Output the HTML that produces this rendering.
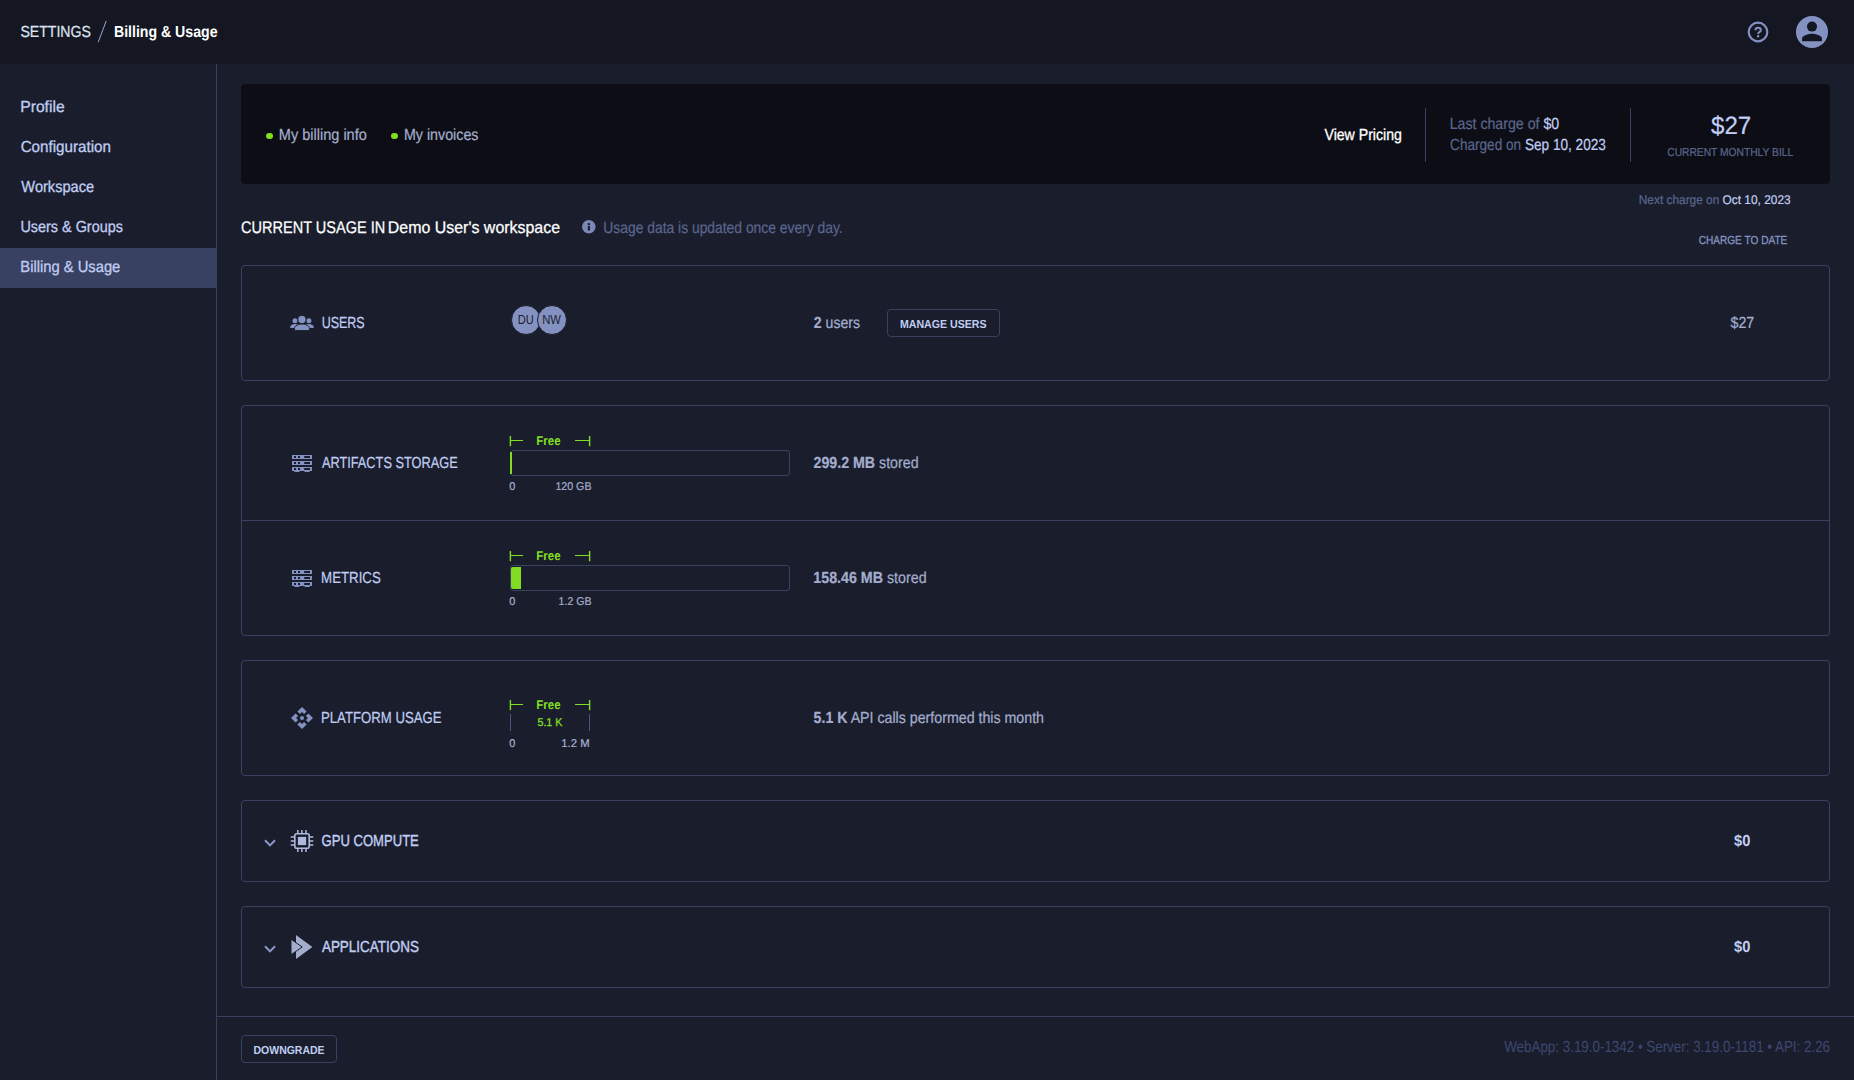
<!DOCTYPE html>
<html lang="en"><head><meta charset="utf-8"><title>Billing &amp; Usage</title>
<style>
html,body{margin:0;padding:0}
body{width:1854px;height:1080px;overflow:hidden;position:relative;background:#1a1e2c;font-family:"Liberation Sans",sans-serif;}
.a{position:absolute;box-sizing:border-box}
.t{text-rendering:geometricPrecision;position:absolute;left:0;white-space:nowrap;transform-origin:0 0;font-family:"Liberation Sans",sans-serif;font-weight:400}
.t b{font-weight:700}
.card{position:absolute;box-sizing:border-box;left:241px;width:1589px;border:1px solid #384161;border-radius:4px}
.btn{position:absolute;box-sizing:border-box;border:1px solid #384161;border-radius:4px}
.bar{position:absolute;box-sizing:border-box;left:510px;width:280px;height:26px;border:1px solid #384161;border-radius:3px}
.g{position:absolute;background:#82dc23}
.av{position:absolute;box-sizing:content-box;width:28.5px;height:28.5px;border-radius:50%;background:#8492c2;border:1px solid #1a1e2c}
svg{position:absolute;overflow:visible}

</style></head>
<body>
<!-- header -->
<div class="a" style="left:0;top:0;width:1854px;height:64px;background:#141722"></div>
<svg style="left:96px;top:19px" width="12" height="25"><line x1="2.2" y1="23.2" x2="10.2" y2="2" stroke="#9aa5d0" stroke-width="1"/></svg>
<!-- help icon -->
<svg style="left:1746px;top:20px" width="24" height="24" viewBox="0 0 24 24"><circle cx="12" cy="12" r="9.3" fill="none" stroke="#8492c2" stroke-width="2.2"/><path d="M9.5 10.2c0-1.5 1.1-2.4 2.65-2.4s2.65.9 2.65 2.3c0 1.1-.6 1.6-1.4 2.1-.8.5-1.3.9-1.3 1.7" fill="none" stroke="#8492c2" stroke-width="2"/><rect x="11" y="15.1" width="2.2" height="2.2" fill="#8492c2"/></svg>
<!-- user avatar -->
<svg style="left:1796px;top:16px" width="32" height="32" viewBox="0 0 32 32"><circle cx="16" cy="16" r="16" fill="#8492c2"/><circle cx="16" cy="10.6" r="5" fill="#141722"/><path d="M6 25.2v-2.5c0-3.3 6.7-5 10-5s10 1.7 10 5v2.5z" fill="#141722"/></svg>

<!-- sidebar -->
<div class="a" style="left:0;top:248px;width:216px;height:40px;background:#384161"></div>
<div class="a" style="left:216px;top:64px;width:1px;height:1016px;background:#384161"></div>

<!-- billing summary card -->
<div class="a" style="left:241px;top:84px;width:1589px;height:100px;background:#0d0e15;border-radius:4px"></div>
<div class="a" style="left:266px;top:132.7px;width:6.6px;height:6.6px;border-radius:50%;background:#82dc23"></div>
<div class="a" style="left:391.4px;top:132.7px;width:6.6px;height:6.6px;border-radius:50%;background:#82dc23"></div>
<div class="a" style="left:1425px;top:108px;width:1px;height:54px;background:#384161"></div>
<div class="a" style="left:1630px;top:108px;width:1px;height:54px;background:#384161"></div>

<!-- info icon -->
<svg style="left:581.9px;top:219.5px" width="13.6" height="13.6" viewBox="0 0 13.6 13.6"><circle cx="6.8" cy="6.8" r="6.8" fill="#7a87b7"/><rect x="5.8" y="6.1" width="2.2" height="4.3" fill="#1a1e2c"/><rect x="5.8" y="3.1" width="2.2" height="2.1" fill="#1a1e2c"/></svg>

<!-- cards -->
<div class="card" style="top:265px;height:116px"></div>
<div class="card" style="top:405px;height:231px"></div>
<div class="a" style="left:242px;top:520px;width:1587px;height:1px;background:#384161"></div>
<div class="card" style="top:660px;height:116px"></div>
<div class="card" style="top:800px;height:82px"></div>
<div class="card" style="top:906px;height:82px"></div>

<!-- card 1: users -->
<svg style="left:290px;top:311px" width="24" height="24" viewBox="0 0 24 24" fill="#8492c2"><circle cx="5" cy="9.7" r="2.5"/><circle cx="18.9" cy="9.7" r="2.5"/><path d="M.2 17v-.9c0-2 2.5-3.2 4.8-3.2 1.3 0 2.4.3 3.3.8-2.2.8-3.6 2-3.9 3.3z"/><path d="M23.7 17v-.9c0-2-2.5-3.2-4.8-3.2-1.3 0-2.4.3-3.3.8 2.2.8 3.6 2 3.9 3.3z"/><g stroke="#1a1e2c" stroke-width=".9"><circle cx="11.95" cy="8.5" r="4.1"/><path d="M4.5 19.5v-2c0-3 4.2-4.4 7.45-4.4s7.450 1.4 7.45 4.4v2z"/></g></svg>
<div class="av" style="left:510.9px;top:304.7px"></div>
<div class="av" style="left:536.6px;top:304.7px"></div>
<div class="btn" style="left:887px;top:309px;width:113px;height:28px"></div>

<!-- card 2: storage rows -->
<svg style="left:290px;top:451px" width="24" height="24" viewBox="0 0 24 24"><g fill="#8492c2"><path fill-rule="evenodd" d="M2 4h20v4H2zM4 5v2h2V5zm4 0v2h2V5zm6.2 0v2H20V5z"/><path fill-rule="evenodd" d="M2 10h20v4H2zM4 11v2h2v-2zm4 0v2h2v-2zm6.2 0v2H20v-2z"/><path fill-rule="evenodd" d="M2 16h20v4H2zM4 17v2h2v-2zm4 0v2h2v-2zm6.2 0v2H20v-2z"/><rect x="4.4" y="20" width="5" height="1"/><rect x="14.6" y="20" width="5" height="1"/></g></svg>
<svg style="left:290px;top:566px" width="24" height="24" viewBox="0 0 24 24"><g fill="#8492c2"><path fill-rule="evenodd" d="M2 4h20v4H2zM4 5v2h2V5zm4 0v2h2V5zm6.2 0v2H20V5z"/><path fill-rule="evenodd" d="M2 10h20v4H2zM4 11v2h2v-2zm4 0v2h2v-2zm6.2 0v2H20v-2z"/><path fill-rule="evenodd" d="M2 16h20v4H2zM4 17v2h2v-2zm4 0v2h2v-2zm6.2 0v2H20v-2z"/><rect x="4.4" y="20" width="5" height="1"/><rect x="14.6" y="20" width="5" height="1"/></g></svg>

<!-- Free brackets -->
<svg style="left:509px;top:435px" width="83" height="12"><path d="M1.4 1v10.2M80.6 1v10.2" fill="none" stroke="#82dc23" stroke-width="1.4"/><path d="M1.4 5.5H14M66 5.5h14.6" fill="none" stroke="#82dc23" stroke-width="1.1"/></svg>
<svg style="left:509px;top:550px" width="83" height="12"><path d="M1.4 1v10.2M80.6 1v10.2" fill="none" stroke="#82dc23" stroke-width="1.4"/><path d="M1.4 5.5H14M66 5.5h14.6" fill="none" stroke="#82dc23" stroke-width="1.1"/></svg>
<svg style="left:509px;top:699px" width="83" height="12"><path d="M1.4 1v10.2M80.6 1v10.2" fill="none" stroke="#82dc23" stroke-width="1.4"/><path d="M1.4 5.5H14M66 5.5h14.6" fill="none" stroke="#82dc23" stroke-width="1.1"/></svg>

<div class="bar" style="top:450px"></div>
<div class="g" style="left:509.8px;top:452px;width:2.5px;height:22px"></div>
<div class="bar" style="top:565px"></div>
<div class="g" style="left:511px;top:567px;width:10px;height:22px;border-radius:2px 0 0 2px"></div>

<!-- card 3: platform usage -->
<svg style="left:290px;top:706px" width="24" height="24" viewBox="0 0 24 24" fill="#8492c2"><circle cx="12" cy="12" r="2"/><path d="M12 6l2.12 2.12 2.5-2.5L12 1 7.38 5.62l2.5 2.5L12 6zm-6 6l2.12-2.12-2.5-2.5L1 12l4.62 4.62 2.5-2.5L6 12zm12 0l-2.12 2.12 2.5 2.5L23 12l-4.62-4.62-2.5 2.5L18 12zm-6 6l-2.12-2.12-2.5 2.5L12 23l4.62-4.62-2.5-2.5L12 18z"/></svg>
<div class="a" style="left:510px;top:714px;width:1px;height:17px;background:#4a547d"></div>
<div class="a" style="left:589px;top:714px;width:1px;height:17px;background:#4a547d"></div>

<!-- card 4: GPU compute -->
<svg style="left:264px;top:838px" width="12" height="10"><path d="M1 2.2l5 5.2 5-5.2" fill="none" stroke="#8b98c8" stroke-width="2"/></svg>
<svg style="left:290px;top:829px" width="24" height="24" viewBox="0 0 24 24"><rect x="4.8" y="4.8" width="14.4" height="14.4" rx="2" fill="none" stroke="#b0b9dc" stroke-width="1.6"/><rect x="7.9" y="7.9" width="8.2" height="8.2" fill="#b0b9dc"/><path d="M7.8 1v3M11.9 1v3M16 1v3M7.8 20v3M11.9 20v3M16 20v3M.7 8h3.3M.7 12.1h3.3M.7 16.1h3.3M20 8h3.3M20 12.1h3.3M20 16.1h3.3" stroke="#b0b9dc" stroke-width="1.5" fill="none"/></svg>

<!-- card 5: applications -->
<svg style="left:264px;top:944px" width="12" height="10"><path d="M1 2.2l5 5.2 5-5.2" fill="none" stroke="#8b98c8" stroke-width="2"/></svg>
<svg style="left:290px;top:934px" width="24" height="26" viewBox="0 0 24 26"><path d="M6 1L22.4 13 6 25z" fill="#a4adcd"/><path d="M1 5.2L12.2 13 1 20.8z" fill="#a4adcd" stroke="#1a1e2c" stroke-width="1"/></svg>

<!-- footer -->
<div class="a" style="left:217px;top:1016px;width:1637px;height:1px;background:#384161"></div>
<div class="btn" style="left:241px;top:1035px;width:96px;height:28px"></div>

<!-- text layer -->
<div class="t" style="top:24px;font-size:16.00px;line-height:18px;transform:translateX(20.41px) scaleX(0.8814);-webkit-text-stroke:0.22px;color:#dfe3f1;">SETTINGS</div>
<div class="t" style="top:24px;font-size:16.00px;line-height:18px;transform:translateX(113.93px) scaleX(0.8824);color:#ffffff;font-weight:700;">Billing &amp; Usage</div>
<div class="t" style="top:99px;font-size:16.00px;line-height:18px;transform:translateX(20.21px) scaleX(0.9796);-webkit-text-stroke:0.30px;color:#c1cdf3;">Profile</div>
<div class="t" style="top:139px;font-size:16.00px;line-height:18px;transform:translateX(20.64px) scaleX(0.9493);-webkit-text-stroke:0.30px;color:#c1cdf3;">Configuration</div>
<div class="t" style="top:179px;font-size:16.00px;line-height:18px;transform:translateX(21.35px) scaleX(0.9132);-webkit-text-stroke:0.30px;color:#c1cdf3;">Workspace</div>
<div class="t" style="top:219px;font-size:16.00px;line-height:18px;transform:translateX(20.39px) scaleX(0.9010);-webkit-text-stroke:0.30px;color:#c1cdf3;">Users &amp; Groups</div>
<div class="t" style="top:259px;font-size:16.00px;line-height:18px;transform:translateX(20.30px) scaleX(0.9219);-webkit-text-stroke:0.30px;color:#c1cdf3;">Billing &amp; Usage</div>
<div class="t" style="top:127px;font-size:16.00px;line-height:18px;transform:translateX(278.80px) scaleX(0.9079);-webkit-text-stroke:0.22px;color:#a4adcd;">My billing info</div>
<div class="t" style="top:127px;font-size:16.00px;line-height:18px;transform:translateX(403.90px) scaleX(0.8920);-webkit-text-stroke:0.22px;color:#a4adcd;">My invoices</div>
<div class="t" style="top:127px;font-size:16.00px;line-height:18px;transform:translateX(1324.47px) scaleX(0.8823);-webkit-text-stroke:0.30px;color:#ffffff;">View Pricing</div>
<div class="t" style="top:116px;font-size:16.00px;line-height:18px;transform:translateX(1449.64px) scaleX(0.8865);-webkit-text-stroke:0.22px;"><span style="color:#5a658e">Last charge of </span><span style="color:#c1cdf3">$0</span></div>
<div class="t" style="top:137px;font-size:16.00px;line-height:18px;transform:translateX(1450.07px) scaleX(0.8500);-webkit-text-stroke:0.22px;"><span style="color:#5a658e">Charged on </span><span style="color:#c1cdf3">Sep 10, 2023</span></div>
<div class="t" style="top:113px;font-size:25.02px;line-height:27px;transform:translateX(1711.02px) scaleX(0.9645);-webkit-text-stroke:0.22px;color:#c1cdf3;">$27</div>
<div class="t" style="top:146px;font-size:11.64px;line-height:14px;transform:translateX(1667.23px) scaleX(0.8819);-webkit-text-stroke:0.22px;color:#5a658e;">CURRENT MONTHLY BILL</div>
<div class="t" style="top:193px;font-size:12.65px;line-height:15px;transform:translateX(1638.77px) scaleX(0.9393);-webkit-text-stroke:0.22px;"><span style="color:#5a658e">Next charge on </span><span style="color:#c1cdf3">Oct 10, 2023</span></div>
<div class="t" style="top:234px;font-size:11.64px;line-height:14px;transform:translateX(1698.63px) scaleX(0.8692);-webkit-text-stroke:0.30px;color:#8492c2;">CHARGE TO DATE</div>
<div class="t" style="top:218px;font-size:16.87px;line-height:19px;transform:translateX(241.05px) scaleX(0.8614);-webkit-text-stroke:0.25px;color:#ffffff;">CURRENT USAGE IN</div>
<div class="t" style="top:218px;font-size:16.87px;line-height:19px;transform:translateX(387.80px) scaleX(0.9457);-webkit-text-stroke:0.25px;color:#ffffff;">Demo User's workspace</div>
<div class="t" style="top:220px;font-size:16.00px;line-height:18px;transform:translateX(603.35px) scaleX(0.8661);-webkit-text-stroke:0.22px;color:#5a658e;">Usage data is updated once every day.</div>
<div class="t" style="top:315px;font-size:16.00px;line-height:18px;transform:translateX(321.63px) scaleX(0.7806);-webkit-text-stroke:0.22px;color:#c1cdf3;">USERS</div>
<div class="t" style="top:312px;font-size:13.09px;line-height:15px;transform:translateX(517.82px) scaleX(0.8482);color:#1a1e2c;">DU</div>
<div class="t" style="top:312px;font-size:13.09px;line-height:15px;transform:translateX(542.19px) scaleX(0.8620);color:#1a1e2c;">NW</div>
<div class="t" style="top:315px;font-size:16.00px;line-height:18px;transform:translateX(813.81px) scaleX(0.8802);-webkit-text-stroke:0.22px;"><b style="color:#a4adcd">2</b><span style="color:#a4adcd"> users</span></div>
<div class="t" style="top:318px;font-size:11.64px;line-height:14px;transform:translateX(899.93px) scaleX(0.9128);color:#c1cdf3;font-weight:700;">MANAGE USERS</div>
<div class="t" style="top:315px;font-size:16.00px;line-height:18px;transform:translateX(1730.57px) scaleX(0.8852);-webkit-text-stroke:0.22px;color:#a4adcd;">$27</div>
<div class="t" style="top:455px;font-size:16.00px;line-height:18px;transform:translateX(321.89px) scaleX(0.7983);-webkit-text-stroke:0.22px;color:#c1cdf3;">ARTIFACTS STORAGE</div>
<div class="t" style="top:570px;font-size:16.00px;line-height:18px;transform:translateX(321.09px) scaleX(0.8292);-webkit-text-stroke:0.22px;color:#c1cdf3;">METRICS</div>
<div class="t" style="top:433px;font-size:12.80px;line-height:15px;transform:translateX(536.31px) scaleX(0.8990);color:#82dc23;font-weight:700;">Free</div>
<div class="t" style="top:481px;font-size:11.35px;line-height:13px;transform:translateX(509.17px) scaleX(0.9619);-webkit-text-stroke:0.22px;color:#a4adcd;">0</div>
<div class="t" style="top:548px;font-size:12.80px;line-height:15px;transform:translateX(536.31px) scaleX(0.8990);color:#82dc23;font-weight:700;">Free</div>
<div class="t" style="top:596px;font-size:11.35px;line-height:13px;transform:translateX(509.17px) scaleX(0.9619);-webkit-text-stroke:0.22px;color:#a4adcd;">0</div>
<div class="t" style="top:481px;font-size:11.35px;line-height:13px;transform:translateX(555.43px) scaleX(0.9368);-webkit-text-stroke:0.22px;color:#a4adcd;">120 GB</div>
<div class="t" style="top:596px;font-size:11.35px;line-height:13px;transform:translateX(558.59px) scaleX(0.9300);-webkit-text-stroke:0.22px;color:#a4adcd;">1.2 GB</div>
<div class="t" style="top:455px;font-size:16.00px;line-height:18px;transform:translateX(813.49px) scaleX(0.8881);-webkit-text-stroke:0.22px;"><b style="color:#a4adcd">299.2 MB</b><span style="color:#a4adcd"> stored</span></div>
<div class="t" style="top:570px;font-size:16.00px;line-height:18px;transform:translateX(813.31px) scaleX(0.8905);-webkit-text-stroke:0.22px;"><b style="color:#a4adcd">158.46 MB</b><span style="color:#a4adcd"> stored</span></div>
<div class="t" style="top:710px;font-size:16.00px;line-height:18px;transform:translateX(321.00px) scaleX(0.8230);-webkit-text-stroke:0.22px;color:#c1cdf3;">PLATFORM USAGE</div>
<div class="t" style="top:697px;font-size:12.80px;line-height:15px;transform:translateX(536.31px) scaleX(0.8990);color:#82dc23;font-weight:700;">Free</div>
<div class="t" style="top:717px;font-size:11.35px;line-height:13px;transform:translateX(537.43px) scaleX(0.9447);-webkit-text-stroke:0.30px;color:#82dc23;">5.1 K</div>
<div class="t" style="top:738px;font-size:11.35px;line-height:13px;transform:translateX(509.17px) scaleX(0.9619);-webkit-text-stroke:0.22px;color:#a4adcd;">0</div>
<div class="t" style="top:738px;font-size:11.35px;line-height:13px;transform:translateX(561.28px) scaleX(0.9980);-webkit-text-stroke:0.22px;color:#a4adcd;">1.2 M</div>
<div class="t" style="top:710px;font-size:16.00px;line-height:18px;transform:translateX(813.54px) scaleX(0.8874);-webkit-text-stroke:0.22px;"><b style="color:#a4adcd">5.1 K</b><span style="color:#a4adcd"> API calls performed this month</span></div>
<div class="t" style="top:833px;font-size:16.00px;line-height:18px;transform:translateX(321.54px) scaleX(0.8167);-webkit-text-stroke:0.40px;color:#c1cdf3;">GPU COMPUTE</div>
<div class="t" style="top:939px;font-size:16.00px;line-height:18px;transform:translateX(321.93px) scaleX(0.8407);-webkit-text-stroke:0.40px;color:#c1cdf3;">APPLICATIONS</div>
<div class="t" style="top:833px;font-size:16.00px;line-height:18px;transform:translateX(1733.98px) scaleX(0.9168);color:#c1cdf3;font-weight:700;">$0</div>
<div class="t" style="top:939px;font-size:16.00px;line-height:18px;transform:translateX(1733.98px) scaleX(0.9168);color:#c1cdf3;font-weight:700;">$0</div>
<div class="t" style="top:1044px;font-size:11.64px;line-height:14px;transform:translateX(253.47px) scaleX(0.9031);color:#c1cdf3;font-weight:700;">DOWNGRADE</div>
<div class="t" style="top:1039px;font-size:16.00px;line-height:18px;transform:translateX(1504.19px) scaleX(0.8365);color:#3d4770;">WebApp: 3.19.0-1342 • Server: 3.19.0-1181 • API: 2.26</div>
</body></html>
